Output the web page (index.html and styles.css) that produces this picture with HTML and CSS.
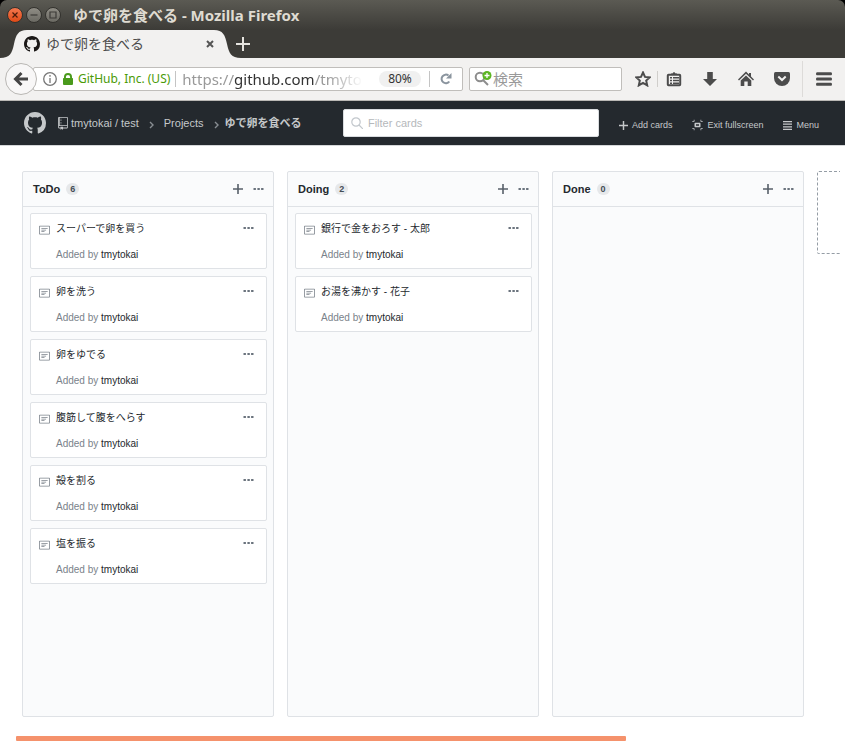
FILE: index.html
```html
<!DOCTYPE html>
<html lang="ja">
<head>
<meta charset="utf-8">
<meta name="viewport" content="width=device-width, initial-scale=1">
<title>ゆで卵を食べる</title>
<link rel="stylesheet" href="styles.css">
</head>
<body>
<svg class="sprite" aria-hidden="true">
  <symbol id="mark" viewBox="0 0 16 16"><path d="M8 0C3.58 0 0 3.58 0 8c0 3.54 2.29 6.53 5.47 7.59.4.07.55-.17.55-.38 0-.19-.01-.82-.01-1.49-2.01.37-2.53-.49-2.69-.94-.09-.23-.48-.94-.82-1.13-.28-.15-.68-.52-.01-.53.63-.01 1.08.58 1.23.82.72 1.21 1.87.87 2.33.66.07-.52.28-.87.51-1.07-1.78-.2-3.64-.89-3.64-3.95 0-.87.31-1.59.82-2.15-.08-.2-.36-1.02.08-2.12 0 0 .67-.21 2.2.82.64-.18 1.32-.27 2-.27s1.36.09 2 .27c1.53-1.04 2.2-.82 2.2-.82.44 1.1.16 1.92.08 2.12.51.56.82 1.27.82 2.15 0 3.07-1.87 3.75-3.65 3.95.29.25.54.73.54 1.48 0 1.07-.01 1.93-.01 2.2 0 .21.15.46.55.38A8.01 8.01 0 0 0 16 8c0-4.42-3.58-8-8-8z"/></symbol>
  <symbol id="repo" viewBox="0 0 12 16"><path d="M4 9H3V8h1v1zm0-3H3v1h1V6zm0-2H3v1h1V4zm0-2H3v1h1V2zm8-1v12c0 .55-.45 1-1 1H6v2l-1.500-1.500L3 16v-2H1c-.55 0-1-.45-1-1V1c0-.55.45-1 1-1h10c.55 0 1 .45 1 1zm-1 10H1v2h2v-1h3v1h5v-2zm0-10H2v9h9V1z"/></symbol>
  <symbol id="note" viewBox="0 0 14 16"><path d="M3 10h4V9H3v1zm0-2h6V7H3v1zm0-2h8V5H3v1zm10 6H1V3h12v9zM1 2c-.55 0-1 .45-1 1v9c0 .55.45 1 1 1h12c.55 0 1-.45 1-1V3c0-.55-.45-1-1-1H1z"/></symbol>
  <symbol id="plus" viewBox="0 0 10 10"><path d="M4.200 0h1.600v4.200H10v1.600H5.800V10H4.200V5.800H0V4.200h4.200z"/></symbol>
  <symbol id="dots" viewBox="0 0 10 2"><path d="M0 0h2.400v2H0zM3.900 0h2.400v2H3.900zM7.600 0H10v2H7.600z"/></symbol>
  <symbol id="shrink" viewBox="0 0 14 16"><path d="M2 4H0V3h2V1h1v2c0 .547-.453 1-1 1zm0 8H0v1h2v2h1v-2c0-.547-.453-1-1-1zm9-2c0 .547-.453 1-1 1H4c-.547 0-1-.453-1-1V6c0-.547.453-1 1-1h6c.547 0 1 .453 1 1v4zM9 7H5v2h4V7zm2 6v2h1v-2h2v-1h-2c-.547 0-1 .453-1 1zm1-10V1h-1v2c0 .547.453 1 1 1h2V3h-2z"/></symbol>
  <symbol id="bars" viewBox="0 0 9 9"><path d="M0 0h9v1.200H0zM0 2.600h9v1.200H0zM0 5.200h9v1.200H0zM0 7.800h9V9H0z"/></symbol>
  <symbol id="chevron" viewBox="0 0 5 8"><path d="M1 1l3 3-3 3" fill="none" stroke="currentColor" stroke-width="1.400"/></symbol>
</svg>

<header class="browser">
  <div class="titlebar">
    <button class="win win-close" aria-label="Close window"><svg viewBox="0 0 16 16"><path d="M5.500 5.500l5 5m0-5l-5 5"/></svg></button>
    <button class="win" aria-label="Minimize"><svg viewBox="0 0 16 16"><path d="M4.500 8h7"/></svg></button>
    <button class="win" aria-label="Maximize"><svg viewBox="0 0 16 16"><path d="M5 5h6v6H5z"/></svg></button>
    <span class="window-title">ゆで卵を食べる - Mozilla Firefox</span>
  </div>
  <div class="tabs">
    <svg class="curve" viewBox="0 0 27 28" aria-hidden="true"><path d="M0 28C10 28 12 23 14 14S18 0 27 0v28z"/></svg>
    <div class="tab">
      <svg class="favicon" aria-hidden="true"><use href="#mark"/></svg>
      <span class="tab-title">ゆで卵を食べる</span>
      <button class="tab-close" aria-label="Close tab"><svg viewBox="0 0 8 8"><path d="M1 1l6 6m0-6L1 7"/></svg></button>
    </div>
    <svg class="curve" viewBox="0 0 27 28" aria-hidden="true"><path d="M27 28C17 28 15 23 13 14S9 0 0 0v28z"/></svg>
    <button class="new-tab" aria-label="New tab"><svg viewBox="0 0 14 14"><path d="M7 0v14M0 7h14"/></svg></button>
  </div>
  <div class="toolbar">
    <button class="back" aria-label="Back"><svg viewBox="0 0 16 16"><path d="M8.500 2L2.500 8l6 6M3 8h12"/></svg></button>
    <div class="urlbar">
      <svg class="info" viewBox="0 0 14 14" aria-hidden="true"><circle cx="7" cy="7" r="6.300"/><path d="M7 6v5M7 3v1.800"/></svg>
      <svg class="lock" viewBox="0 0 10 12" aria-hidden="true"><path d="M1 5V4a4 4 0 0 1 8 0v1h.3q.7 0 .7.700V11q0 1-1 1H1q-1 0-1-1V5.700Q0 5 .7 5zm1.900 0h4.200V4a2.100 2.100 0 0 0-4.200 0z"/></svg>
      <span class="identity">GitHub, Inc. (US)</span>
      <div class="address" role="textbox" aria-label="Address" contenteditable="true" spellcheck="false">https://<span class="host">github.com</span>/tmyto</div>
      <button class="zoom">80%</button>
      <button class="reload" aria-label="Reload"><svg viewBox="0 0 12 12"><path d="M9.300 8.500A4.300 4.300 0 1 1 8.500 2.500" fill="none" stroke="currentColor" stroke-width="2"/><path d="M11.500 0v5.500H6z"/></svg></button>
    </div>
    <label class="websearch">
      <svg viewBox="0 0 18 16" aria-hidden="true"><circle class="lens" cx="6" cy="6" r="4.300"/><path class="lens" d="M9 9l5 5"/><circle class="badge" cx="13" cy="4.500" r="4.500"/><path class="cross" d="M13 2v5M10.500 4.500h5"/></svg>
      <input type="text" placeholder="検索" aria-label="検索">
    </label>
    <div class="tools">
      <button aria-label="Bookmark"><svg viewBox="0 0 16 16"><path class="line" d="M8 1.500l2 4.400 4.700.5-3.500 3.200 1 4.800L8 12l-4.200 2.400 1-4.800L1.300 6.400 6 5.900z"/></svg></button>
      <button class="library" aria-label="Bookmarks list"><svg viewBox="0 0 16 16"><path class="line" d="M2.500 3.800h11q.7 0 .7.700v9q0 .7-.7.700h-11q-.7 0-.7-.7v-9q0-.7.7-.7z"/><path d="M5 4V2.500h1.500Q8-.5 9.500 2.500H11V4zM4 6h2v1.500H4zm3 0h6v1.500H7zM4 8.700h2v1.500H4zm3 0h6v1.500H7zM4 11.400h2V13H4zm3 0h6V13H7z"/></svg></button>
      <button aria-label="Downloads"><svg viewBox="0 0 16 16"><path d="M5.200 1h5.600v7H15l-7 7-7-7h4.200z"/></svg></button>
      <button aria-label="Home"><svg viewBox="0 0 16 16"><path d="M8 .5l3 3V2h2v3.500l3 3-1 1-7-6.700-7 6.700-1-1zM8 4.500l5.300 5V15H9.700v-4.500H6.300V15H2.700V9.500z"/></svg></button>
      <button aria-label="Pocket"><svg viewBox="0 0 16 16"><path d="M1.500 1h13Q16 1 16 2.500V7A8 8 0 0 1 0 7V2.500Q0 1 1.500 1z"/><path class="tick" d="M4.300 5.500L8 9l3.700-3.500"/></svg></button>
      <button class="app-menu" aria-label="Open menu"><svg viewBox="0 0 16 16"><path d="M1 1.200h14q1 0 1 1.500t-1 1.500H1q-1 0-1-1.500 0-1.500 1-1.500zM1 6.500h14q1 0 1 1.500t-1 1.500H1Q0 9.500 0 8q0-1.500 1-1.500zM1 11.800h14q1 0 1 1.500t-1 1.500H1q-1 0-1-1.500 0-1.500 1-1.500z"/></svg></button>
    </div>
  </div>
</header>

<nav class="project-bar">
  <a class="logo" href="#" aria-label="GitHub"><svg><use href="#mark"/></svg></a>
  <ol class="crumbs">
    <li><svg class="repo" aria-hidden="true"><use href="#repo"/></svg><a href="#">tmytokai</a> / <a href="#">test</a></li>
    <li><svg class="chevron" aria-hidden="true"><use href="#chevron"/></svg><a href="#">Projects</a></li>
    <li class="current"><svg class="chevron" aria-hidden="true"><use href="#chevron"/></svg>ゆで卵を食べる</li>
  </ol>
  <label class="filter">
    <svg viewBox="0 0 12 12" aria-hidden="true"><circle cx="5" cy="5" r="4.200"/><path d="M8 8l4 4"/></svg>
    <input type="text" placeholder="Filter cards" aria-label="Filter cards">
  </label>
  <div class="actions">
    <button><svg class="i-plus" aria-hidden="true"><use href="#plus"/></svg>Add cards</button>
    <button><svg class="i-shrink" aria-hidden="true"><use href="#shrink"/></svg>Exit fullscreen</button>
    <button><svg class="i-bars" aria-hidden="true"><use href="#bars"/></svg>Menu</button>
  </div>
</nav>

<main class="board">
  <section class="column">
    <header><h2>ToDo</h2><span class="count">6</span><button class="add" aria-label="Add note"><svg><use href="#plus"/></svg></button><button class="more" aria-label="Column menu"><svg><use href="#dots"/></svg></button></header>
    <div class="cards">
      <article class="card"><svg class="note" aria-hidden="true"><use href="#note"/></svg><div class="body"><p>スーパーで卵を買う</p><small>Added by <a href="#">tmytokai</a></small></div><button class="more" aria-label="Card menu"><svg><use href="#dots"/></svg></button></article>
      <article class="card"><svg class="note" aria-hidden="true"><use href="#note"/></svg><div class="body"><p>卵を洗う</p><small>Added by <a href="#">tmytokai</a></small></div><button class="more" aria-label="Card menu"><svg><use href="#dots"/></svg></button></article>
      <article class="card"><svg class="note" aria-hidden="true"><use href="#note"/></svg><div class="body"><p>卵をゆでる</p><small>Added by <a href="#">tmytokai</a></small></div><button class="more" aria-label="Card menu"><svg><use href="#dots"/></svg></button></article>
      <article class="card"><svg class="note" aria-hidden="true"><use href="#note"/></svg><div class="body"><p>腹筋して腹をへらす</p><small>Added by <a href="#">tmytokai</a></small></div><button class="more" aria-label="Card menu"><svg><use href="#dots"/></svg></button></article>
      <article class="card"><svg class="note" aria-hidden="true"><use href="#note"/></svg><div class="body"><p>殻を割る</p><small>Added by <a href="#">tmytokai</a></small></div><button class="more" aria-label="Card menu"><svg><use href="#dots"/></svg></button></article>
      <article class="card"><svg class="note" aria-hidden="true"><use href="#note"/></svg><div class="body"><p>塩を振る</p><small>Added by <a href="#">tmytokai</a></small></div><button class="more" aria-label="Card menu"><svg><use href="#dots"/></svg></button></article>
    </div>
  </section>
  <section class="column">
    <header><h2>Doing</h2><span class="count">2</span><button class="add" aria-label="Add note"><svg><use href="#plus"/></svg></button><button class="more" aria-label="Column menu"><svg><use href="#dots"/></svg></button></header>
    <div class="cards">
      <article class="card"><svg class="note" aria-hidden="true"><use href="#note"/></svg><div class="body"><p>銀行で金をおろす - 太郎</p><small>Added by <a href="#">tmytokai</a></small></div><button class="more" aria-label="Card menu"><svg><use href="#dots"/></svg></button></article>
      <article class="card"><svg class="note" aria-hidden="true"><use href="#note"/></svg><div class="body"><p>お湯を沸かす - 花子</p><small>Added by <a href="#">tmytokai</a></small></div><button class="more" aria-label="Card menu"><svg><use href="#dots"/></svg></button></article>
    </div>
  </section>
  <section class="column">
    <header><h2>Done</h2><span class="count">0</span><button class="add" aria-label="Add note"><svg><use href="#plus"/></svg></button><button class="more" aria-label="Column menu"><svg><use href="#dots"/></svg></button></header>
    <div class="cards"></div>
  </section>
  <button class="new-column" aria-label="Add column"></button>
</main>
<div class="scroll-track"><div class="scroll-thumb"></div></div>
</body>
</html>
```
FILE: styles.css
```css
* { box-sizing: border-box; }

body {
  margin: 0;
  min-height: 100vh;
  display: flex;
  flex-direction: column;
  overflow: hidden;
  background: #fff;
  color: #24292e;
  font: 11px/16px "Liberation Sans", "Noto Sans CJK JP", sans-serif;
}

button {
  padding: 0;
  border: 0;
  background: none;
  color: inherit;
  font: inherit;
  display: flex;
  align-items: center;
  justify-content: center;
  flex: none;
}

a { color: inherit; text-decoration: none; }
svg { display: block; flex: none; fill: currentColor; }
input { border: 0; padding: 0; background: none; font: inherit; outline: 0; min-width: 0; flex: 1; }
.sprite { position: absolute; width: 0; height: 0; }

/* Browser window */
.browser {
  background: #000;
  font-family: "Noto Sans", "Noto Sans CJK JP", sans-serif;
}

.titlebar {
  display: flex;
  align-items: center;
  gap: 3px;
  height: 30px;
  padding: 0 7px;
  border-radius: 7px 7px 0 0;
  background: linear-gradient(#5b5a53, #3c3b37);
}

.win {
  width: 16px;
  height: 16px;
  border: 1px solid #33322e;
  border-radius: 50%;
  background: linear-gradient(#8f8d85, #6b6a63);
  color: #3c3b37;
}
.win svg { width: 16px; height: 16px; fill: none; stroke: currentColor; stroke-width: 1.2; }
.win-close { background: linear-gradient(#f4784f, #df4a16); color: #4a1b0a; }

.window-title {
  margin-left: 9px;
  color: #dfdbd2;
  font-size: 15px;
  line-height: 20px;
  font-weight: bold;
  white-space: nowrap;
}

.tabs { display: flex; height: 28px; background: #3c3b37; }
.curve { width: 27px; height: 28px; fill: #f2f1f0; }
.tab {
  display: flex;
  align-items: center;
  width: 187px;
  background: #f2f1f0;
  color: #4c4c4c;
}
.favicon { width: 16px; height: 16px; margin: 0 6px 0 -3px; color: #1b1817; }
.tab-title { flex: 1; font-size: 14px; line-height: 20px; }
.tab-close svg { width: 8px; height: 8px; fill: none; stroke: #555; stroke-width: 2; }
.new-tab { margin-left: -5px; }
.new-tab svg { width: 14px; height: 14px; fill: none; stroke: #e6e4df; stroke-width: 2; }

.toolbar {
  display: flex;
  align-items: center;
  height: 43px;
  padding: 0 13px 0 5px;
  border-bottom: 1px solid #bab8b5;
  background: #f2f1f0;
  color: #4c4c4c;
}
.back {
  z-index: 1;
  width: 32px;
  height: 32px;
  border: 1px solid #b9b7b4;
  border-radius: 50%;
  background: #f8f7f7;
}
.back svg { width: 16px; height: 16px; fill: none; stroke: #444; stroke-width: 3; }

.urlbar, .websearch {
  display: flex;
  align-items: center;
  height: 24px;
  border: 1px solid #c0bebb;
  border-radius: 2px;
  background: #fff;
}
.urlbar { flex: 1; min-width: 0; margin-left: -4px; padding-left: 9px; }
.info { width: 14px; height: 14px; fill: none; stroke: #777; stroke-width: 1.3; }
.lock { width: 10px; height: 12px; margin: 0 5px 0 6px; color: #4a9a1c; }
.identity {
  padding-right: 5px;
  border-right: 1px solid #c4c4c4;
  color: #4a9a06;
  font-size: 12px;
  line-height: 16px;
  white-space: nowrap;
}
.address {
  flex: 1;
  min-width: 0;
  margin: 0 16px 0 6px;
  overflow: hidden;
  color: #999;
  font-size: 15px;
  line-height: 20px;
  white-space: nowrap;
  outline: 0;
  mask-image: linear-gradient(to left, transparent, #000 36px);
}
.host { color: #333; }
.zoom {
  width: 42px;
  height: 16px;
  border-radius: 8px;
  background: #f0f0f0;
  color: #333;
  font-size: 12px;
}
.reload { width: 33px; height: 16px; margin-left: 8px; border-left: 1px solid #c4c4c4; color: #8a949e; }
.reload svg { width: 12px; height: 12px; }

.websearch { width: 153px; margin-left: 6px; padding: 0 4px; gap: 1px; }
.websearch svg { width: 18px; height: 16px; }
.websearch input { font-size: 15px; line-height: 20px; }
.websearch input::placeholder { color: #999; opacity: 1; }
.lens { fill: none; stroke: #8d8d8d; stroke-width: 2; }
.badge { fill: #5bb522; }
.cross { stroke: #fff; stroke-width: 1.3; }

.tools { display: flex; align-items: center; gap: 20px; margin-left: 13px; }
.tools svg { width: 16px; height: 16px; }
.line { fill: none; stroke: currentColor; stroke-width: 2; }
.tick { fill: none; stroke: #f2f1f0; stroke-width: 2; }
.library { margin-left: -14px; padding-left: 8px; border-left: 1px solid #d0cecb; }
.app-menu { height: 36px; margin-left: -8px; padding-left: 13px; border-left: 1px solid #dddbd9; }

/* Project header */
.project-bar {
  display: flex;
  align-items: center;
  height: 45px;
  padding: 0 26px 0 24px;
  border-bottom: 1px solid #d5d7d9;
  background: #24292e;
  color: #c5c8ca;
}
.logo svg { width: 22px; height: 22px; }
.crumbs {
  display: flex;
  flex: 1;
  margin: 0;
  padding: 0 0 0 12px;
  list-style: none;
  white-space: nowrap;
}
.crumbs li { display: flex; align-items: center; gap: 3px; }
.repo { width: 10px; height: 13px; }
.chevron { width: 5px; height: 8px; margin: 4px 7px 0 10px; color: #888d92; }
.current { font-weight: bold; }
.current .chevron { margin-right: 3px; }
.filter {
  display: flex;
  align-items: center;
  gap: 5px;
  width: 256px;
  height: 28px;
  padding: 0 7px;
  border: 1px solid #d9dcdf;
  border-radius: 2px;
  background: #fff;
}
.filter svg { width: 12px; height: 12px; fill: none; stroke: #c2c7cc; stroke-width: 1.2; }
.filter input::placeholder { color: #b5b8bb; opacity: 1; }
.actions { display: flex; gap: 20px; margin-left: 20px; padding-top: 4px; font-size: 9px; }
.actions button { gap: 4px; white-space: nowrap; }
.i-plus { width: 9px; height: 9px; }
.i-shrink { width: 11px; height: 12px; }
.i-bars { width: 9px; height: 9px; }

/* Board */
.board {
  display: flex;
  flex: 1;
  gap: 13px;
  margin-right: 5px;
  padding: 25px 0 19px 22px;
  overflow: hidden;
}
.column {
  flex: none;
  width: 252px;
  border: 1px solid #dfe2e6;
  border-radius: 2px;
  background: #fafbfc;
}
.column > header {
  display: flex;
  align-items: center;
  height: 35px;
  padding: 0 9px 0 10px;
  border-bottom: 1px solid #dfe2e6;
}
.column h2 { margin: 0; font-size: 11px; line-height: 16px; }
.count {
  min-width: 13px;
  margin: 0 auto 0 6px;
  padding: 0 4px;
  border-radius: 6px;
  background: #e6e8ea;
  color: #444d56;
  font-size: 9px;
  line-height: 12px;
  font-weight: bold;
  text-align: center;
}
.add { color: #586069; }
.add svg { width: 10px; height: 10px; }
.more { color: #6a737d; }
.more svg { width: 11px; height: 2px; }
.add + .more { margin-left: 10px; }

.cards { display: grid; gap: 7px; padding: 6px 6px 6px 7px; }
.card {
  display: flex;
  align-items: flex-start;
  padding: 7px 12px 5px 8px;
  border: 1px solid #dfe2e6;
  border-radius: 2px;
  background: #fff;
}
.note { width: 11px; height: 13px; margin: 3px 6px 0 0; color: #7c838b; }
.body { flex: 1; display: grid; gap: 10px; }
.body p { margin: 0; font-size: 10px; line-height: 16px; }
.body small { color: #7a828a; font-size: 10px; line-height: 16px; }
.body a { color: #24292e; }
.card .more { height: 14px; }

.new-column {
  width: 252px;
  height: 83px;
  border: 1px dashed #959da5;
  border-radius: 2px;
}

.scroll-track { padding: 0 16px 3px; }
.scroll-thumb { width: 75%; height: 5px; border-radius: 1px; background: #f5926c; }
```
